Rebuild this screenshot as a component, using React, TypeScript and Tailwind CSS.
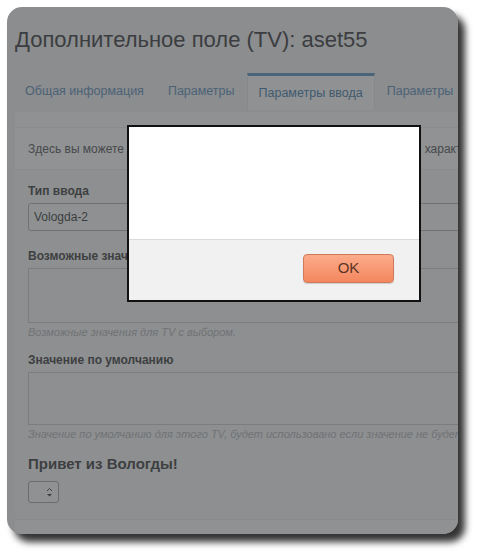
import React from 'react';

const font = { fontFamily: '"Liberation Sans", Arial, sans-serif' };

export default function App() {
  return (
    <div className="w-[480px] h-[556px] bg-white pt-[7px] pl-[7px]" style={font}>
      {/* Window */}
      <div className="relative w-[451px] h-[527px] rounded-[15px] overflow-hidden bg-[#8b8d8f] shadow-[7px_8px_7px_rgba(0,0,0,0.8)]">
        <div className="flex flex-col w-[600px] h-full">
          {/* Title */}
          <h1 className="pl-[8px] pt-[20px] h-[64px] text-[22px] leading-[26px] text-[#3b3d40]">
            Дополнительное поле (TV): aset55
          </h1>

          {/* Tabs */}
          <div className="flex items-end h-[39px] pl-[6px] text-[12.5px] text-[#4b6276]">
            <TabItem text="Общая информация" />
            <TabItem text="Параметры" />
            <div className="h-[37px] px-[11px] flex items-center border-t-[3px] border-[#4a657b] bg-[#8f9193] text-[#3f5a6f] border-x border-x-[#868889]">
              Параметры ввода
            </div>
            <TabItem text="Параметры" />
          </div>

          {/* Panel */}
          <div className="flex-1 flex flex-col ml-[8px] mt-[2px] bg-[#8d8f91]">
            <div className="h-[16px] bg-[#8f9193] border-b border-[#898b8d]" />
            <div className="h-[42px] flex items-center pl-[13px] bg-[#909294] text-[12px] text-[#47494b] border-b border-[#898b8d]">
              Здесь вы можете изменить параметры ввода TV, которые определяют характеристики
            </div>

            <div className="flex flex-col pl-[13px] pt-[14px]">
              <Label text="Тип ввода" />
              <div className="mt-[4px] h-[28px] rounded-[3px] border border-[#6f7173] bg-[#8e9092] flex items-center pl-[5px] text-[12px] text-[#3c3e40]">
                Vologda-2
              </div>

              <div className="mt-[18px]">
                <Label text="Возможные значения" />
              </div>
              <div className="mt-[4px] h-[55px] border border-[#7a7c7e] bg-[#8d8f91]" />
              <Help text="Возможные значения для TV с выбором." />

              <div className="mt-[14px]">
                <Label text="Значение по умолчанию" />
              </div>
              <div className="mt-[4px] h-[53px] border border-[#7a7c7e] bg-[#8d8f91]" />
              <Help text="Значение по умолчанию для этого TV, будет использовано если значение не будет указано." />

              <div className="mt-[14px] text-[15px] leading-[18px] font-bold text-[#3d3f41]">Привет из Вологды!</div>

              <div className="mt-[8px] w-[31px] h-[22px] rounded-[3px] border border-[#6a6c6e] bg-[#8f9193] flex items-center justify-end pr-[5px]">
                <svg width="7" height="13" viewBox="0 0 7 13">
                  <path d="M1 5 L3.5 2.5 L6 5" fill="none" stroke="#3d3f41" strokeWidth="1" />
                  <path d="M1 8 L3.5 10.5 L6 8 Z" fill="#3d3f41" />
                </svg>
              </div>
            </div>

            <div className="mt-auto h-[15px] bg-[#8f9193] border-t border-[#888a8c]" />
          </div>
        </div>

        {/* Modal */}
        <div className="absolute left-[120px] top-[118px] w-[294px] h-[177px] border-2 border-[#111] bg-white flex flex-col">
          <div className="flex-1" />
          <div className="h-[61px] bg-[#f1f1f1] border-t border-[#dcdcdc] flex items-start justify-end pr-[25px] pt-[14px]">
            <button className="w-[91px] h-[29px] rounded-[4px] border border-[#cf7a5a] bg-gradient-to-b from-[#fcab8b] to-[#f3875e] text-[15px] text-[#5b3424] shadow-[0_1px_1px_rgba(0,0,0,0.15)]">
              OK
            </button>
          </div>
        </div>
      </div>
    </div>
  );
}

function TabItem({ text }: { text: string }) {
  return <div className="h-[37px] px-[12px] flex items-center">{text}</div>;
}

function Label({ text }: { text: string }) {
  return <div className="text-[12px] leading-[15px] font-bold text-[#3d3f41]">{text}</div>;
}

function Help({ text }: { text: string }) {
  return <div className="mt-[2px] text-[11px] leading-[14px] italic text-[#707274] whitespace-nowrap">{text}</div>;
}
